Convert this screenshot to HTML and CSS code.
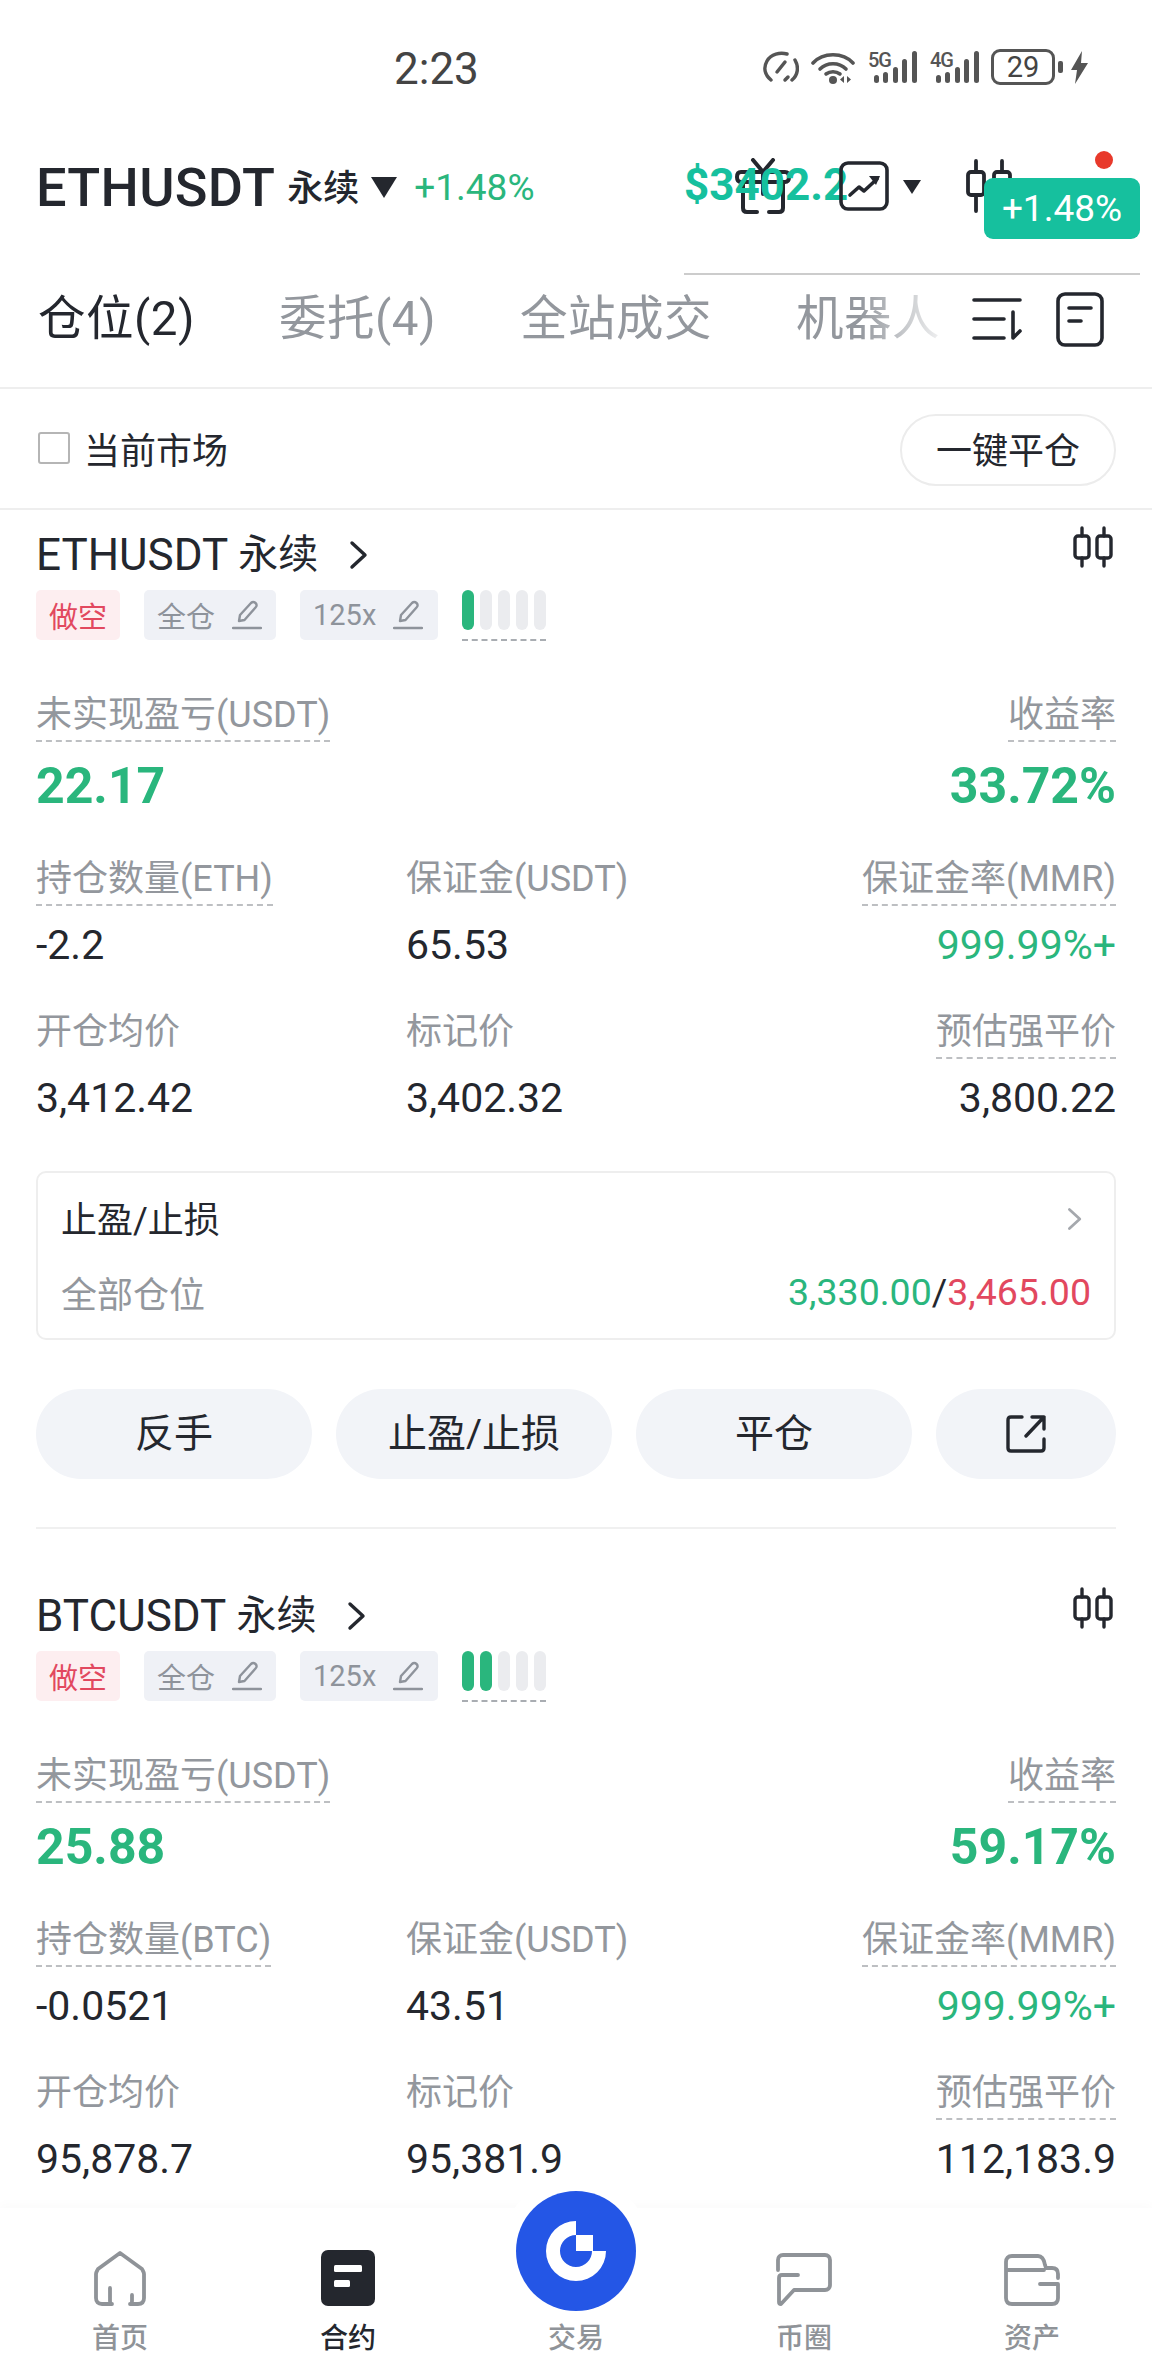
FILE: index.html
```html
<!DOCTYPE html>
<html lang="zh-CN">
<head>
    <meta charset="UTF-8">
    <meta name="viewport" content="width=device-width, initial-scale=1.0">
    <title>合约仓位</title>
    <link rel="stylesheet" href="styles.css">
</head>
<body>

<svg class="icon-defs" width="0" height="0">
    <symbol id="candles" viewBox="0 0 42 42">
        <g fill="none" stroke="currentColor" stroke-width="3.4" stroke-linecap="round" stroke-linejoin="round">
            <path d="M10 2v8M10 32v8M32 2v8M32 32v8"/>
            <rect x="3" y="10" width="14" height="22" rx="3"/>
            <rect x="25" y="10" width="14" height="22" rx="3"/>
        </g>
    </symbol>
    <symbol id="pen" viewBox="0 0 30 30">
        <g fill="none" stroke="currentColor" stroke-width="2.4" stroke-linecap="round" stroke-linejoin="round">
            <path d="M7 21l1-6L19 3c1.500-1.400 3-1.400 4.500 0s1.500 3 0 4.500L12.500 20z"/>
            <path d="M1 28h28"/>
        </g>
    </symbol>
    <symbol id="chevron" viewBox="0 0 20 30">
        <path d="M3 3l13 12L3 27" fill="none" stroke="currentColor" stroke-width="3.400" stroke-linecap="round" stroke-linejoin="round"/>
    </symbol>
    <symbol id="share" viewBox="0 0 40 40">
        <g fill="none" stroke="currentColor" stroke-width="3.400" stroke-linecap="round" stroke-linejoin="round">
            <path d="M16 3H5C3 3 2 4 2 6v28c0 2 1 3 3 3h30c2 0 3-1 3-3v-9"/>
            <path d="M38 3v12M38 3H26M38 3L20 22"/>
        </g>
    </symbol>
</svg>

<div class="app">

    <!-- status bar -->
    <div class="status-bar">
        <span class="status-time">2:23</span>
        <div class="status-icons">
            <svg width="36" height="32" viewBox="0 0 36 32"><g fill="none" stroke="#555" stroke-width="3.500" stroke-linecap="round"><path d="M8 29C2 24 0 17 4 10 8 3 17 1 24 3"/><path d="M32 9c4 7 3 15-3 20"/><path d="M22 29l3-3M14 21l8-10"/></g></svg>
            <svg width="44" height="33" viewBox="0 0 44 33"><g fill="none" stroke="#555" stroke-width="3.600" stroke-linecap="round"><path d="M2 12C12 1 32 1 42 12"/><path d="M9 18c7-7 19-7 26 0"/><path d="M15 23c4-3 10-3 14 0"/></g><circle cx="22" cy="29" r="4" fill="#555"/><path d="M33 25v7l-4-3.500zM36 25v7l4-3.500z" fill="#555"/></svg>
            <div class="signal"><span class="signal-tag">5G</span><svg width="43" height="32" viewBox="0 0 43 32"><g fill="#555"><rect x="0" y="24" width="5" height="8" rx="2.500"/><rect x="9" y="21" width="5" height="11" rx="2.500"/><rect x="19" y="16" width="5" height="16" rx="2.500"/><rect x="28" y="8" width="5" height="24" rx="2.500"/><rect x="38" y="0" width="5" height="32" rx="2.500"/></g></svg></div>
            <div class="signal"><span class="signal-tag">4G</span><svg width="43" height="32" viewBox="0 0 43 32"><g fill="#555"><rect x="0" y="24" width="5" height="8" rx="2.500"/><rect x="9" y="21" width="5" height="11" rx="2.500"/><rect x="19" y="16" width="5" height="16" rx="2.500"/><rect x="28" y="8" width="5" height="24" rx="2.500"/><rect x="38" y="0" width="5" height="32" rx="2.500"/></g></svg></div>
            <div class="battery"><span class="battery-level">29</span></div>
            <span class="battery-tip"></span>
            <svg class="bolt" width="17" height="33" viewBox="0 0 17 33"><path d="M11 0L0 19h6l-2 14L17 12h-7z" fill="#555"/></svg>
        </div>
    </div>

    <!-- symbol header -->
    <div class="header">
        <span class="header-symbol">ETHUSDT</span>
        <span class="header-type">永续</span>
        <span class="header-caret"></span>
        <span class="header-change">+1.48%</span>
    </div>

    <!-- these sit over the header, as they do in the capture -->
    <svg class="float-gift" width="56" height="56" viewBox="0 0 56 56"><g fill="none" stroke="#24272e" stroke-width="4" stroke-linecap="round" stroke-linejoin="round"><path d="M18 2l10 12L38 2"/><path d="M6 14h44c3 0 4 2 4 5 0 3-1 5-4 5H6c-3 0-4-2-4-5 0-3 1-5 4-5z"/><path d="M8 24v26c0 2 1 4 4 4h10M48 24v26c0 2-1 4-4 4H34"/><path d="M28 14v22"/></g></svg>
    <span class="float-price">$3402.2</span>
    <svg class="float-chart" width="50" height="50" viewBox="0 0 50 50"><rect x="2" y="2" width="46" height="46" rx="7" fill="none" stroke="#24272e" stroke-width="3.600"/><path d="M11 34l9-8 5 4 13-12" fill="none" stroke="#24272e" stroke-width="3.600" stroke-linecap="round" stroke-linejoin="round"/><path d="M30 15h11l-4 9z" fill="#24272e"/></svg>
    <span class="float-caret"></span>
    <svg class="float-candles" width="46" height="54" viewBox="0 0 46 54"><g fill="none" stroke="#24272e" stroke-width="3.800" stroke-linecap="round" stroke-linejoin="round"><path d="M10 2v11M10 36v16M36 2v11"/><rect x="2" y="13" width="16" height="23" rx="3"/><rect x="28" y="13" width="16" height="23" rx="3"/></g></svg>
    <span class="float-dot"></span>
    <span class="float-badge">+1.48%</span>
    <span class="float-line"></span>

    <!-- tabs -->
    <div class="tabs">
        <div class="tab-strip">
            <span class="tab tab-active">仓位(2)</span>
            <span class="tab">委托(4)</span>
            <span class="tab">全站成交</span>
            <span class="tab">机器人</span>
        </div>
        <div class="tab-tools">
            <svg width="50" height="42" viewBox="0 0 50 42"><g fill="none" stroke="#24272e" stroke-width="3.600" stroke-linecap="round" stroke-linejoin="round"><path d="M2 2h46M2 21h30M2 40h30M41 14v26l7-7"/></g></svg>
            <svg width="48" height="55" viewBox="0 0 48 55"><g fill="none" stroke="#24272e" stroke-width="3.600" stroke-linecap="round"><rect x="2" y="2" width="44" height="51" rx="7"/><path d="M13 16h22M13 29h12"/></g></svg>
        </div>
    </div>

    <!-- filter row -->
    <div class="filter-row">
        <label class="market-check"><span class="checkbox"></span>当前市场</label>
        <button class="close-all" type="button">一键平仓</button>
    </div>

    <!-- ETH position -->
    <div class="position">
        <div class="position-title">
            <div class="position-name">ETHUSDT <span class="cjk-name">永续</span><svg class="name-chevron" width="20" height="30"><use href="#chevron"/></svg></div>
            <svg class="position-candles" width="42" height="42"><use href="#candles"/></svg>
        </div>
        <div class="tags">
            <span class="tag tag-short">做空</span>
            <span class="tag tag-edit tag-wide">全仓<svg width="30" height="30"><use href="#pen"/></svg></span>
            <span class="tag tag-edit tag-lever">125x<svg width="30" height="30"><use href="#pen"/></svg></span>
            <div class="risk-bars">
                <span class="bar bar-on"></span><span class="bar"></span><span class="bar"></span><span class="bar"></span><span class="bar"></span>
            </div>
        </div>

        <div class="pnl">
            <div class="pnl-left">
                <span class="label dashed">未实现盈亏(USDT)</span>
                <span class="pnl-value">22.17</span>
            </div>
            <div class="pnl-right">
                <span class="label dashed">收益率</span>
                <span class="pnl-value">33.72%</span>
            </div>
        </div>

        <div class="stats">
            <div class="stat"><span class="label dashed">持仓数量(ETH)</span><span class="value">-2.2</span></div>
            <div class="stat"><span class="label">保证金(USDT)</span><span class="value">65.53</span></div>
            <div class="stat stat-right"><span class="label dashed">保证金率(MMR)</span><span class="value green">999.99%+</span></div>
            <div class="stat"><span class="label">开仓均价</span><span class="value">3,412.42</span></div>
            <div class="stat"><span class="label">标记价</span><span class="value">3,402.32</span></div>
            <div class="stat stat-right"><span class="label dashed">预估强平价</span><span class="value">3,800.22</span></div>
        </div>

        <div class="tpsl">
            <div class="tpsl-row">
                <span class="tpsl-title">止盈/止损</span>
                <svg class="tpsl-chevron" width="16" height="24"><use href="#chevron"/></svg>
            </div>
            <div class="tpsl-row">
                <span class="tpsl-sub">全部仓位</span>
                <span class="tpsl-prices"><span class="green">3,330.00</span>/<span class="red">3,465.00</span></span>
            </div>
        </div>

        <div class="actions">
            <button class="action" type="button">反手</button>
            <button class="action" type="button">止盈/止损</button>
            <button class="action" type="button">平仓</button>
            <button class="action action-share" type="button"><svg width="40" height="40"><use href="#share"/></svg></button>
        </div>
    </div>

    <!-- BTC position -->
    <div class="position">
        <div class="position-title">
            <div class="position-name">BTCUSDT <span class="cjk-name">永续</span><svg class="name-chevron" width="20" height="30"><use href="#chevron"/></svg></div>
            <svg class="position-candles" width="42" height="42"><use href="#candles"/></svg>
        </div>
        <div class="tags">
            <span class="tag tag-short">做空</span>
            <span class="tag tag-edit tag-wide">全仓<svg width="30" height="30"><use href="#pen"/></svg></span>
            <span class="tag tag-edit tag-lever">125x<svg width="30" height="30"><use href="#pen"/></svg></span>
            <div class="risk-bars">
                <span class="bar bar-on"></span><span class="bar bar-on"></span><span class="bar"></span><span class="bar"></span><span class="bar"></span>
            </div>
        </div>

        <div class="pnl">
            <div class="pnl-left">
                <span class="label dashed">未实现盈亏(USDT)</span>
                <span class="pnl-value">25.88</span>
            </div>
            <div class="pnl-right">
                <span class="label dashed">收益率</span>
                <span class="pnl-value">59.17%</span>
            </div>
        </div>

        <div class="stats">
            <div class="stat"><span class="label dashed">持仓数量(BTC)</span><span class="value">-0.0521</span></div>
            <div class="stat"><span class="label">保证金(USDT)</span><span class="value">43.51</span></div>
            <div class="stat stat-right"><span class="label dashed">保证金率(MMR)</span><span class="value green">999.99%+</span></div>
            <div class="stat"><span class="label">开仓均价</span><span class="value">95,878.7</span></div>
            <div class="stat"><span class="label">标记价</span><span class="value">95,381.9</span></div>
            <div class="stat stat-right"><span class="label dashed">预估强平价</span><span class="value">112,183.9</span></div>
        </div>
    </div>

    <!-- bottom nav -->
    <div class="bottom-nav">
        <span class="nav-bump"></span>
        <div class="nav-item">
            <svg width="56" height="56" viewBox="0 0 56 56"><path d="M20 54H10c-4 0-6-2-6-6V24c0-2 1-3 2-5L28 3l22 16c1 2 2 3 2 5v24c0 4-2 6-6 6H38M20 54c-1 0-2-1-2-3V38M38 54c1 0 2-1 2-3v-6" fill="none" stroke="#8f9398" stroke-width="3.800" stroke-linecap="round" stroke-linejoin="round"/></svg>
            <span>首页</span>
        </div>
        <div class="nav-item nav-active">
            <svg width="54" height="56" viewBox="0 0 54 56"><rect width="54" height="56" rx="7" fill="#24272e"/><rect x="13" y="15" width="28" height="7" rx="1.500" fill="#fff"/><rect x="13" y="30" width="16" height="7" rx="1.500" fill="#fff"/></svg>
            <span>合约</span>
        </div>
        <div class="nav-item nav-trade">
            <span class="trade-circle">
                <svg width="60" height="60" viewBox="0 0 60 60"><path d="M30 0A30 30 0 1 0 60 30H46A16 16 0 1 1 30 14Z M30 14H47V30H30Z" fill="#fff"/></svg>
            </span>
            <span>交易</span>
        </div>
        <div class="nav-item">
            <svg width="58" height="54" viewBox="0 0 58 54"><path d="M3 18V8c0-3 2-5 5-5h42c3 0 5 2 5 5v25c0 3-2 5-5 5H19L6 52c-1 0-2 0-2-2V26c0-2 1-3 3-3h16" fill="none" stroke="#8f9398" stroke-width="3.800" stroke-linecap="round" stroke-linejoin="round"/></svg>
            <span>币圈</span>
        </div>
        <div class="nav-item">
            <svg width="56" height="52" viewBox="0 0 56 52"><path d="M2 16V8c0-4 2-6 6-6h26c4 0 6 3 7 9l1 3h6c4 0 6 2 6 6v4M2 14v30c0 4 2 6 6 6h40c4 0 6-2 6-6V30H36M2 16h38" fill="none" stroke="#8f9398" stroke-width="3.800" stroke-linecap="round" stroke-linejoin="round"/></svg>
            <span>资产</span>
        </div>
    </div>

</div>

</body>
</html>
```

FILE: styles.css
```css
* {
    box-sizing: border-box;
}

body {
    margin: 0;
    background-color: #fff;
    font-family: Roboto, "Noto Sans CJK SC", sans-serif;
    color: #24272e;
}

button {
    font-family: inherit;
    color: inherit;
}

.icon-defs {
    position: absolute;
}

.app {
    position: relative;
    width: 1152px;
    height: 2376px;
    overflow: hidden;
    background-color: #fff;
}

.green {
    color: #2ab67d;
}

.red {
    color: #e2485f;
}

/* status bar */
.status-bar {
    position: relative;
    height: 136px;
}

.status-time {
    position: absolute;
    left: 394px;
    top: 45px;
    font-size: 44px;
    line-height: 48px;
    color: #444;
}

.status-icons {
    position: absolute;
    left: 763px;
    top: 49px;
    display: flex;
    align-items: center;
    height: 36px;
}

.status-icons > svg {
    margin-right: 12px;
}

.signal {
    position: relative;
    width: 62px;
    height: 32px;
    padding-left: 7px;
}

.signal-tag {
    position: absolute;
    left: 1px;
    top: 1px;
    font-size: 20px;
    line-height: 17px;
    font-weight: 500;
    letter-spacing: -1px;
    color: #555;
}

.battery {
    width: 64px;
    height: 36px;
    border: 3px solid #555;
    border-radius: 9px;
    text-align: center;
}

.battery-level {
    display: block;
    font-size: 29px;
    line-height: 30px;
    color: #444;
}

.battery-tip {
    width: 5px;
    height: 12px;
    margin-left: 3px;
    margin-right: 8px;
    border-radius: 2px;
    background-color: #555;
}

/* header */
.header {
    display: flex;
    align-items: center;
    height: 100px;
    padding: 2px 0 0 36px;
}

.header-symbol {
    font-size: 54px;
    font-weight: 500;
    letter-spacing: 0.3px;
}

.header-type {
    margin: 0 0 4px 12px;
    font-size: 36px;
    font-weight: 500;
}

.header-caret {
    width: 0;
    height: 0;
    margin-left: 12px;
    border-left: 13px solid transparent;
    border-right: 13px solid transparent;
    border-top: 21px solid #24272e;
}

.header-change {
    margin-left: 17px;
    font-size: 37px;
    color: #2ab67d;
}

.float-gift {
    position: absolute;
    left: 735px;
    top: 158px;
}

.float-price {
    position: absolute;
    left: 684px;
    top: 157px;
    font-size: 44px;
    line-height: 56px;
    font-weight: 700;
    color: #16c09e;
}

.float-chart {
    position: absolute;
    left: 839px;
    top: 161px;
}

.float-caret {
    position: absolute;
    left: 903px;
    top: 180px;
    width: 0;
    height: 0;
    border-left: 9px solid transparent;
    border-right: 9px solid transparent;
    border-top: 14px solid #24272e;
}

.float-candles {
    position: absolute;
    left: 966px;
    top: 159px;
}

.float-dot {
    position: absolute;
    left: 1095px;
    top: 151px;
    width: 18px;
    height: 18px;
    border-radius: 50%;
    background-color: #e8392b;
}

.float-badge {
    position: absolute;
    left: 984px;
    top: 178px;
    width: 156px;
    height: 61px;
    border-radius: 9px;
    background-color: #16c09e;
    color: #fff;
    font-size: 37px;
    line-height: 61px;
    text-align: center;
}

.float-line {
    position: absolute;
    left: 684px;
    top: 273px;
    width: 456px;
    height: 2px;
    background-color: #ccc;
}

/* tabs */
.tabs {
    display: flex;
    align-items: center;
    justify-content: space-between;
    height: 141px;
    margin-top: 12px;
    padding: 3px 48px 0 38px;
    border-bottom: 2px solid #eee;
}

.tab-strip {
    display: flex;
    gap: 84px;
    width: 902px;
    white-space: nowrap;
    -webkit-mask-image: linear-gradient(to right, #000 91%, rgba(0, 0, 0, 0.15) 100%);
    mask-image: linear-gradient(to right, #000 91%, rgba(0, 0, 0, 0.15) 100%);
}

.tab {
    font-size: 47.5px;
    line-height: 64px;
    letter-spacing: 0.5px;
    color: #93979d;
}

.tab-active {
    color: #24272e;
}

.tab-tools {
    display: flex;
    align-items: center;
    gap: 34px;
}

/* filter row */
.filter-row {
    display: flex;
    align-items: center;
    justify-content: space-between;
    height: 121px;
    padding: 2px 36px 0 38px;
    border-bottom: 2px solid #eee;
}

.market-check {
    display: flex;
    align-items: center;
    margin-bottom: 3px;
    font-size: 36px;
}

.checkbox {
    width: 32px;
    height: 32px;
    margin-right: 14px;
    border: 2px solid #b5b5b5;
    border-radius: 3px;
}

.close-all {
    width: 216px;
    height: 72px;
    padding: 0 0 3px;
    border: 2px solid #ececec;
    border-radius: 36px;
    background-color: #fff;
    font-size: 36px;
}

/* position card */
.position {
    margin: 0 36px 42px;
    padding: 20px 0 48px;
    border-bottom: 2px solid #f0f0f0;
}

.position-title {
    display: flex;
    justify-content: space-between;
    height: 50px;
}

.position-name {
    display: flex;
    align-items: center;
    font-size: 44px;
    line-height: 50px;
    white-space: pre;
}

.cjk-name {
    font-size: 40px;
}

.name-chevron {
    margin-left: 31px;
}

.position-candles {
    margin-top: -4px;
    margin-right: 2px;
}

.tags {
    display: flex;
    align-items: flex-start;
    margin-top: 10px;
    height: 50px;
}

.tag {
    display: flex;
    align-items: center;
    height: 50px;
    border-radius: 5px;
    font-size: 29px;
}

.tag svg {
    margin-left: 17px;
}

.tag-short {
    width: 84px;
    justify-content: center;
    background-color: #fdeef0;
    color: #e2485f;
}

.tag-edit {
    padding-left: 13px;
    background-color: #eff1f6;
    color: #8e939b;
}

.tag-wide {
    width: 132px;
    margin-left: 24px;
}

.tag-lever {
    width: 138px;
    margin-left: 24px;
}

.risk-bars {
    display: flex;
    gap: 6px;
    height: 51px;
    margin-left: 24px;
    padding-bottom: 9px;
    border-bottom: 2px dashed #a9adb2;
}

.bar {
    width: 12px;
    border-radius: 6px;
    background-color: #ebecef;
}

.bar-on {
    background-color: #2ab67d;
}

.label {
    display: inline-block;
    height: 52px;
    font-size: 36px;
    line-height: 50px;
    color: #93979d;
    border-bottom: 2px solid transparent;
    white-space: nowrap;
}

.dashed {
    border-bottom: 2px dashed #bdbfc2;
}

.pnl {
    display: flex;
    justify-content: space-between;
    margin-top: 50px;
}

.pnl-left,
.pnl-right {
    display: flex;
    flex-direction: column;
}

.pnl-left {
    align-items: flex-start;
}

.pnl-right {
    align-items: flex-end;
}

.pnl-value {
    margin-top: 14px;
    font-size: 50px;
    line-height: 60px;
    font-weight: 700;
    color: #2ab67d;
}

.stats {
    display: grid;
    grid-template-columns: 370px 1fr auto;
    row-gap: 34px;
    margin-top: 38px;
}

.stat {
    display: flex;
    flex-direction: column;
    align-items: flex-start;
}

.stat-right {
    align-items: flex-end;
}

.value {
    margin-top: 11px;
    font-size: 41px;
    line-height: 56px;
}

/* take profit / stop loss */
.tpsl {
    display: flex;
    flex-direction: column;
    height: 169px;
    margin-top: 45px;
    padding: 20px 23px 0;
    border: 2px solid #eee;
    border-radius: 10px;
}

.tpsl-row {
    display: flex;
    align-items: center;
    justify-content: space-between;
    height: 48px;
    margin-bottom: 27px;
}

.tpsl-title {
    font-size: 36px;
}

.tpsl-chevron {
    margin: 4px 8px 0 0;
    color: #a5a8ad;
}

.tpsl-sub {
    font-size: 36px;
    color: #93979d;
}

.tpsl-prices {
    font-size: 37.5px;
}

.actions {
    display: flex;
    gap: 24px;
    margin-top: 49px;
}

.action {
    width: 276px;
    height: 90px;
    padding: 0 0 8px;
    border: none;
    border-radius: 45px;
    background-color: #f2f4f8;
    font-size: 39px;
}

.action-share {
    display: flex;
    align-items: center;
    justify-content: center;
    width: 180px;
    padding: 0;
}

/* bottom nav */
.bottom-nav {
    position: absolute;
    left: 0;
    bottom: 0;
    display: flex;
    width: 100%;
    height: 168px;
    padding: 0 6px;
    background-color: #fff;
    box-shadow: 0 -4px 10px rgba(0, 0, 0, 0.02);
}

.nav-bump {
    position: absolute;
    left: 501px;
    top: -32px;
    width: 150px;
    height: 150px;
    border-radius: 50%;
    background-color: #fff;
}

.nav-item {
    position: relative;
    display: flex;
    flex: 1;
    flex-direction: column;
    align-items: center;
    justify-content: flex-end;
    padding-bottom: 19px;
    font-size: 28px;
    line-height: 36px;
    font-weight: 500;
    color: #8f9398;
}

.nav-item svg {
    margin-bottom: 15px;
}

.nav-active {
    color: #24272e;
}

.trade-circle {
    position: absolute;
    left: 54px;
    top: -17px;
    display: flex;
    align-items: center;
    justify-content: center;
    width: 120px;
    height: 120px;
    border-radius: 50%;
    background-color: #2456e6;
}

.trade-circle svg {
    margin: 0;
}
```
